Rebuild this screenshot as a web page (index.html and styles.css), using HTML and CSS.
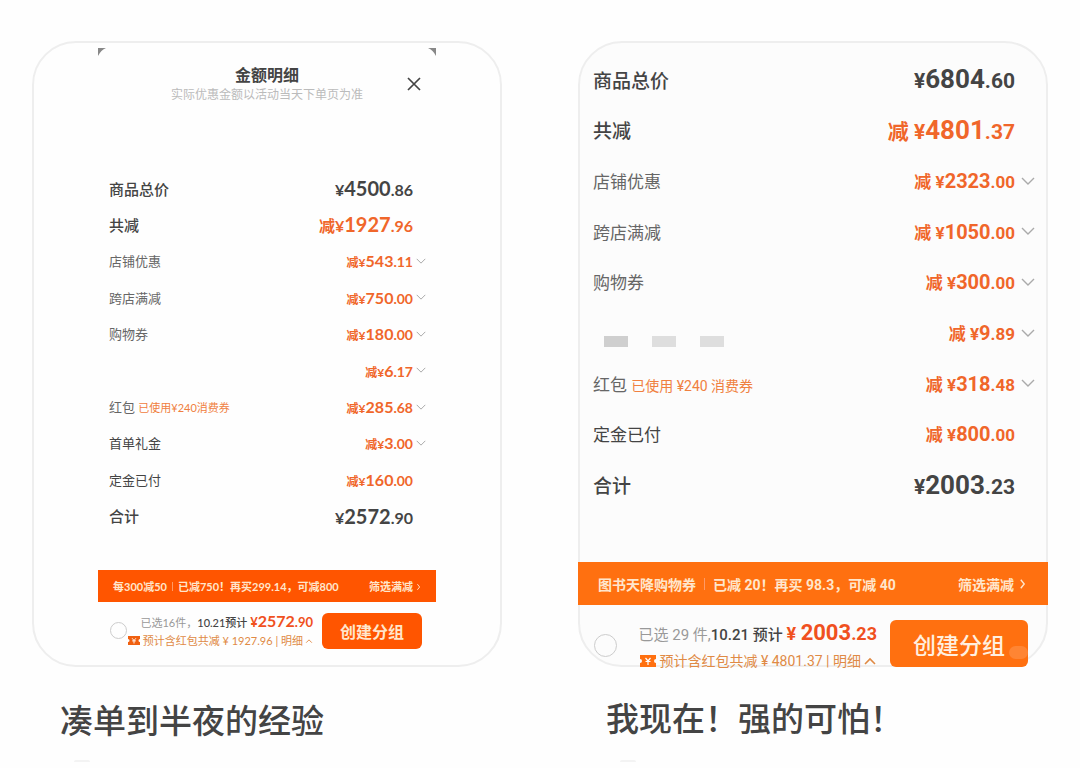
FILE: index.html
```html
<!DOCTYPE html>
<html lang="zh-CN">
<head>
    <meta charset="UTF-8">
    <meta name="viewport" content="width=device-width, initial-scale=1.0">
    <title>金额明细</title>
    <link rel="stylesheet" href="styles.css">
</head>
<body>

<svg class="sprite">
    <symbol id="down" viewBox="0 0 14 8"><path d="M1 1l6 6 6-6" fill="none" stroke="currentColor" stroke-width="1.4"/></symbol>
    <symbol id="up" viewBox="0 0 14 8"><path d="M2 7l5-5 5 5" fill="none" stroke="currentColor" stroke-width="1.6"/></symbol>
    <symbol id="right" viewBox="0 0 8 14"><path d="M2 2l4 5-4 5" fill="none" stroke="currentColor" stroke-width="1.6"/></symbol>
    <symbol id="ticket" viewBox="0 0 16 14">
        <path d="M0 1h16v4a2 2 0 0 0 0 4v4H0V9a2 2 0 0 0 0-4z" fill="currentColor"/>
        <path d="M5.500 4L8 7l2.500-3M8 7v4M5.500 7.500h5" fill="none" stroke="#fff" stroke-width="1.200"/>
    </symbol>
</svg>

<main class="feed">
    <article class="post post-left">
        <section class="card">
            <div class="sheet">
                <header class="sheet-header">
                    <svg class="corner corner-left" viewBox="0 0 8 8"><path d="M0 0h8Q3 2 0 8z"/></svg>
                    <svg class="corner corner-right" viewBox="0 0 8 8"><path d="M8 0H0Q5 2 8 8z"/></svg>
                    <h1>金额明细</h1>
                    <p>实际优惠金额以活动当天下单页为准</p>
                    <button class="close" aria-label="关闭"><svg viewBox="0 0 14 14"><path d="M1 1l12 12M13 1L1 13" fill="none" stroke="currentColor" stroke-width="1.700"/></svg></button>
                </header>

                <dl class="bill">
                    <div class="row big"><dt>商品总价</dt><dd><span class="unit">¥</span>4500<span class="cents">.86</span></dd></div>
                    <div class="row big off"><dt>共减</dt><dd><span class="unit">减¥</span>1927<span class="cents">.96</span></dd></div>
                    <div class="row off"><dt>店铺优惠</dt><dd><span class="unit">减¥</span>543<span class="cents">.11</span><button class="more" aria-label="展开"><svg><use href="#down"/></svg></button></dd></div>
                    <div class="row off"><dt>跨店满减</dt><dd><span class="unit">减¥</span>750<span class="cents">.00</span><button class="more" aria-label="展开"><svg><use href="#down"/></svg></button></dd></div>
                    <div class="row off"><dt>购物券</dt><dd><span class="unit">减¥</span>180<span class="cents">.00</span><button class="more" aria-label="展开"><svg><use href="#down"/></svg></button></dd></div>
                    <div class="row off"><dt></dt><dd><span class="unit">减¥</span>6<span class="cents">.17</span><button class="more" aria-label="展开"><svg><use href="#down"/></svg></button></dd></div>
                    <div class="row off"><dt>红包 <small>已使用¥240消费券</small></dt><dd><span class="unit">减¥</span>285<span class="cents">.68</span><button class="more" aria-label="展开"><svg><use href="#down"/></svg></button></dd></div>
                    <div class="row off dark"><dt>首单礼金</dt><dd><span class="unit">减¥</span>3<span class="cents">.00</span><button class="more" aria-label="展开"><svg><use href="#down"/></svg></button></dd></div>
                    <div class="row off dark"><dt>定金已付</dt><dd><span class="unit">减¥</span>160<span class="cents">.00</span></dd></div>
                    <div class="row big"><dt>合计</dt><dd><span class="unit">¥</span>2572<span class="cents">.90</span></dd></div>
                </dl>

                <div class="banner">
                    <span>每300减50<i></i>已减750！再买299.14，可减800</span>
                    <a href="#">筛选满减<svg><use href="#right"/></svg></a>
                </div>

                <footer class="checkout">
                    <input type="radio" aria-label="全选">
                    <div class="info">
                        <p class="total"><span class="muted">已选16件，</span>10.21预计 <b><span class="unit">¥</span>2572<span class="cents">.90</span></b></p>
                        <p class="saved"><svg class="ticket"><use href="#ticket"/></svg>预计含红包共减 ¥ 1927.96 | 明细<svg class="up"><use href="#up"/></svg></p>
                    </div>
                    <button class="create">创建分组</button>
                </footer>
            </div>
        </section>
        <h2>凑单到半夜的经验</h2>
        <span class="avatar"></span>
    </article>

    <article class="post post-right">
        <section class="card">
            <dl class="bill">
                <div class="row big"><dt>商品总价</dt><dd><span class="unit">¥</span>6804<span class="cents">.60</span></dd></div>
                <div class="row big off"><dt>共减</dt><dd><span class="unit">减 ¥</span>4801<span class="cents">.37</span></dd></div>
                <div class="row off"><dt>店铺优惠</dt><dd><span class="unit">减 ¥</span>2323<span class="cents">.00</span><button class="more" aria-label="展开"><svg><use href="#down"/></svg></button></dd></div>
                <div class="row off"><dt>跨店满减</dt><dd><span class="unit">减 ¥</span>1050<span class="cents">.00</span><button class="more" aria-label="展开"><svg><use href="#down"/></svg></button></dd></div>
                <div class="row off"><dt>购物券</dt><dd><span class="unit">减 ¥</span>300<span class="cents">.00</span><button class="more" aria-label="展开"><svg><use href="#down"/></svg></button></dd></div>
                <div class="row off"><dt class="mosaic"><i></i><i></i><i></i></dt><dd><span class="unit">减 ¥</span>9<span class="cents">.89</span><button class="more" aria-label="展开"><svg><use href="#down"/></svg></button></dd></div>
                <div class="row off"><dt>红包 <small>已使用 ¥240 消费券</small></dt><dd><span class="unit">减 ¥</span>318<span class="cents">.48</span><button class="more" aria-label="展开"><svg><use href="#down"/></svg></button></dd></div>
                <div class="row off dark"><dt>定金已付</dt><dd><span class="unit">减 ¥</span>800<span class="cents">.00</span></dd></div>
                <div class="row big"><dt>合计</dt><dd><span class="unit">¥</span>2003<span class="cents">.23</span></dd></div>
            </dl>

            <div class="banner">
                <span>图书天降购物券<i></i>已减 20！再买 98.3，可减 40</span>
                <a href="#">筛选满减<svg><use href="#right"/></svg></a>
            </div>

            <footer class="checkout">
                <input type="radio" aria-label="全选">
                <div class="info">
                    <p class="total"><span class="muted">已选 29 件,</span>10.21 预计 <b><span class="unit">¥ </span>2003<span class="cents">.23</span></b></p>
                    <p class="saved"><svg class="ticket"><use href="#ticket"/></svg>预计含红包共减 ¥ 4801.37 | 明细<svg class="up"><use href="#up"/></svg></p>
                </div>
                <button class="create">创建分组</button>
            </footer>
        </section>
        <h2>我现在！强的可怕！</h2>
        <span class="avatar"></span>
    </article>
</main>

</body>
</html>
```

FILE: styles.css
```css
* {
    box-sizing: border-box;
}

body {
    margin: 0;
    background: #fefefe;
    color: #444;
    font-family: Lato, "Noto Sans CJK SC", sans-serif;
}

h1, h2, p, dl, dd {
    margin: 0;
}

button {
    border: none;
    padding: 0;
    background: none;
    font-family: inherit;
    cursor: pointer;
}

.sprite {
    display: none;
}

.feed {
    display: grid;
    grid-template-columns: 1fr 1fr;
    gap: 76px;
    padding: 41px 32px 0;
}

.post {
    display: flex;
    flex-direction: column;
}

.post-right {
    font-family: Roboto, "Noto Sans CJK SC", sans-serif;
}

.card {
    flex: 1;
    border: 2px solid #eee;
    border-radius: 44px;
    background: #fefefe;
}

.post-right .card {
    background: #fcfcfc;
}

.sheet {
    margin: 5px 64px 0;
}

.sheet-header {
    position: relative;
    padding-top: 17px;
    text-align: center;
}

.sheet-header h1 {
    font-size: 16px;
    line-height: 20px;
    font-weight: 700;
}

.sheet-header p {
    font-size: 12px;
    line-height: 20px;
    color: #bbb;
}

.close {
    position: absolute;
    top: 29px;
    right: 15px;
    width: 14px;
    height: 14px;
    color: #444;
}

.close svg {
    display: block;
}

.corner {
    position: absolute;
    top: 0;
    width: 8px;
    height: 8px;
    fill: #888;
}

.corner-left {
    left: 0;
}

.corner-right {
    right: 0;
}

/* bill rows */

.bill {
    display: grid;
    grid-auto-rows: 1fr;
    min-height: 364px;
    margin: 65px 23px 36px 11px;
    font-size: 13px;
}

.row {
    display: flex;
    justify-content: space-between;
    align-items: center;
    white-space: nowrap;
}

.row dt {
    color: #666;
}

.row.dark dt {
    color: #444;
}

.row.big dt {
    font-size: 15px;
    font-weight: 500;
    color: #444;
}

.row dd {
    position: relative;
    font-size: 16px;
    font-weight: 700;
}

.row.off dd {
    color: #f0662a;
}

.row .unit {
    font-size: 12px;
}

.row .cents {
    font-size: 14px;
}

.row.big dd {
    font-size: 20px;
}

.row.big .unit,
.row.big .cents {
    font-size: 16px;
}

.row small {
    font-size: 11px;
    color: #f08040;
}

.more {
    position: absolute;
    top: 0;
    bottom: 0;
    left: 100%;
    width: 16px;
    color: #aaa;
}

.more svg {
    display: block;
    width: 10px;
    height: 6px;
    margin: 0 auto;
}

.post-right .bill {
    min-height: 456px;
    margin: 11px 31px 52px 13px;
    font-size: 17px;
}

.post-right .row dd {
    font-size: 20px;
}

.post-right .row .unit,
.post-right .row .cents {
    font-size: 17px;
}

.post-right .row.big dt {
    font-size: 19px;
}

.post-right .row.big dd {
    font-size: 26px;
}

.post-right .row.big .unit,
.post-right .row.big .cents {
    font-size: 21px;
}

.post-right .row small {
    font-size: 14px;
}

.post-right .more {
    width: 26px;
}

.post-right .more svg {
    width: 14px;
    height: 8px;
}

.mosaic {
    display: flex;
    gap: 24px;
    padding: 18px 0 0 11px;
}

.mosaic i {
    width: 24px;
    height: 11px;
    background: #cfcfcf;
}

.mosaic i + i {
    background: #dedede;
}

/* orange banner */

.banner {
    display: flex;
    justify-content: space-between;
    align-items: center;
    height: 32px;
    padding: 0 15px;
    background: #ff5500;
    color: #ffe6cc;
    font-size: 11px;
    font-weight: 700;
    white-space: nowrap;
}

.banner i {
    display: inline-block;
    width: 1px;
    height: 9px;
    margin: 0 5px;
    background: #ff9a66;
}

.banner a {
    color: inherit;
    text-decoration: none;
}

.banner svg {
    width: 5px;
    height: 8px;
    margin-left: 3px;
}

.post-right .banner {
    height: 43px;
    margin: 0 -2px;
    padding: 0 22px 0 20px;
    background: #ff7010;
    font-size: 14px;
}

.post-right .banner i {
    height: 12px;
    margin: 0 8px;
}

.post-right .banner svg {
    width: 7px;
    height: 12px;
    margin-left: 5px;
}

/* checkout bar */

.checkout {
    display: flex;
    align-items: center;
    height: 63px;
    padding: 0 14px 6px 12px;
    white-space: nowrap;
}

.checkout input {
    appearance: none;
    flex: none;
    width: 17px;
    height: 17px;
    margin: 0;
    border: 1px solid #ccc;
    border-radius: 50%;
}

.info {
    flex: 1;
    margin-right: 9px;
    text-align: right;
}

.total {
    font-size: 11px;
    line-height: 18px;
    font-weight: 500;
}

.total .muted {
    font-weight: 400;
    color: #999;
}

.total b {
    color: #f05020;
    font-size: 16px;
}

.total .unit,
.total .cents {
    font-size: 13px;
}

.saved {
    display: flex;
    justify-content: flex-end;
    align-items: center;
    font-size: 11px;
    line-height: 17px;
    color: #e08a45;
}

.ticket {
    width: 12px;
    height: 11px;
    margin-right: 3px;
    color: #f06010;
}

.up {
    width: 8px;
    height: 6px;
    margin-left: 2px;
}

.create {
    flex: none;
    width: 100px;
    height: 36px;
    border-radius: 6px;
    background: #ff5500;
    color: #ffe6cc;
    font-size: 16px;
    font-weight: 700;
}

.post-right .checkout {
    align-items: flex-start;
    height: 60px;
    padding: 15px 18px 0 14px;
}

.post-right .checkout input {
    width: 23px;
    height: 23px;
    margin-top: 14px;
}

.post-right .info {
    margin-right: 13px;
}

.post-right .total {
    font-size: 15px;
    line-height: 26px;
}

.post-right .total b {
    font-size: 22px;
}

.post-right .total .unit,
.post-right .total .cents {
    font-size: 18px;
}

.post-right .saved {
    font-size: 14px;
    line-height: 26px;
}

.post-right .ticket {
    width: 16px;
    height: 14px;
    color: #ff7010;
}

.post-right .up {
    width: 14px;
    height: 8px;
}

.post-right .create {
    position: relative;
    width: 138px;
    height: 47px;
    background: #ff7010;
    color: #fff0e0;
    font-size: 23px;
    font-weight: 500;
}

.post-right .create::after {
    content: "";
    position: absolute;
    right: 0;
    bottom: 8px;
    width: 19px;
    height: 13px;
    border-radius: 7px;
    background: rgba(255, 255, 255, 0.15);
}

h2 {
    margin: 29px 0 0 28px;
    font-size: 33px;
    line-height: 48px;
    font-weight: 500;
}

.avatar {
    width: 16px;
    height: 2px;
    margin: 16px 0 0 42px;
    border-radius: 8px 8px 0 0;
    background: #f3f3f3;
}
```
